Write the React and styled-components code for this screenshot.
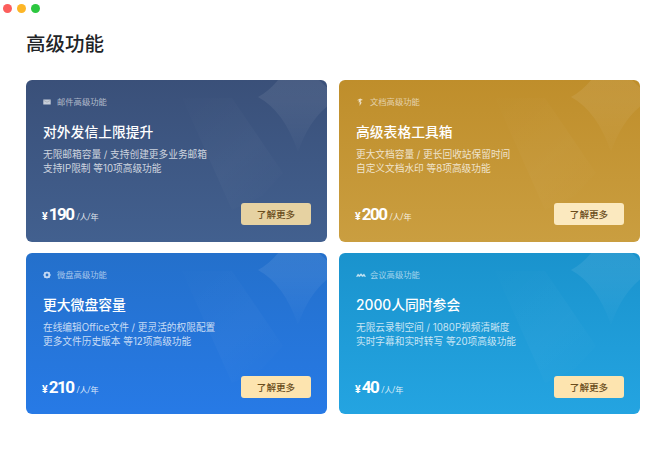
import React from "react";
import styled, { createGlobalStyle } from "styled-components";

const Global = createGlobalStyle`
  html, body { margin: 0; padding: 0; background: #fff; }
  body { font-family: "Inter", "Noto Sans CJK SC", sans-serif; }
`;

const Page = styled.div`
  width: 660px;
  height: 456px;
  overflow: hidden;
  box-sizing: border-box;
  padding: 4px 0 0 3px;
`;

const TrafficLights = styled.div`
  display: flex;
  gap: 5px;
`;

const Light = styled.span`
  width: 9px;
  height: 9px;
  border-radius: 50%;
  background: ${(p) => p.$color};
`;

const Main = styled.main`
  padding: 16px 0 0 23px;
`;

const Title = styled.h1`
  margin: 0 0 21px;
  font-size: 19.5px;
  line-height: 30px;
  font-weight: 500;
  color: #222427;
`;

const Grid = styled.div`
  display: grid;
  grid-template-columns: 301px 301px;
  grid-auto-rows: 161.5px;
  gap: 11px 12px;
`;

const Card = styled.article`
  position: relative;
  overflow: hidden;
  box-sizing: border-box;
  padding: 17px 16px 16.5px 17px;
  border-radius: 6px;
  background: linear-gradient(${(p) => p.$from}, ${(p) => p.$to});
  display: flex;
  flex-direction: column;
  color: #fff;
`;

const Decoration = styled.svg`
  position: absolute;
  inset: 0;
  width: 100%;
  height: 100%;
  pointer-events: none;
`;

const Content = styled.div`
  position: relative;
  flex: 1;
  display: flex;
  flex-direction: column;
`;

const Label = styled.div`
  display: flex;
  align-items: center;
  gap: 6px;
  height: 10px;
  font-size: 8.3px;
  line-height: 10px;
  color: rgba(255, 255, 255, 0.6);
`;

const IconBox = styled.svg`
  width: ${(p) => p.$width || 8}px;
  height: 8px;
  flex: none;
  margin-right: ${(p) => 8 - (p.$width || 8)}px;
  fill: rgba(255, 255, 255, 0.72);
`;

const Heading = styled.h2`
  margin: 15px 0 6px;
  font-size: 13.8px;
  line-height: 20px;
  font-weight: 500;
`;

const Desc = styled.p`
  margin: 0;
  font-size: 9.7px;
  line-height: 14px;
  color: rgba(255, 255, 255, 0.75);
  white-space: pre-line;
`;

const Footer = styled.div`
  margin-top: auto;
  display: flex;
  justify-content: space-between;
  align-items: center;
`;

const Price = styled.div`
  display: flex;
  align-items: baseline;
  font-family: "Roboto", "Noto Sans CJK SC", sans-serif;
`;

const Yen = styled.span`
  font-size: 10.5px;
  font-weight: 700;
  margin-left: -1px;
  margin-right: 1px;
`;

const Amount = styled.span`
  font-size: 17px;
  font-weight: 700;
  letter-spacing: -1.5px;
  margin-right: 3px;
`;

const Unit = styled.span`
  font-size: 8.2px;
  letter-spacing: -0.3px;
  color: rgba(255, 255, 255, 0.85);
`;

const Button = styled.button`
  width: 70px;
  height: 22px;
  padding: 0;
  border: 0;
  border-radius: 3px;
  background: ${(p) => p.$bg};
  color: #6a4d1c;
  font-family: inherit;
  font-size: 9.6px;
  font-weight: 500;
`;

const MailIcon = () => (
  <IconBox viewBox="0 0 8 8">
    <path d="M0.3 1.4h7.4v5.2H0.3z" />
    <path d="M0.6 2.4 4 4.2l3.4-1.8" fill="none" stroke="rgba(0,0,0,.25)" strokeWidth=".6" />
  </IconBox>
);
const DocIcon = () => (
  <IconBox viewBox="0 0 8 8">
    <path d="M1 2.2 4.2.6 7 1.9l-2.2.5V4.4l1.1-.2L3.6 8l.1-4-1.4.4.9-1.8z" />
  </IconBox>
);
const DiskIcon = () => (
  <IconBox viewBox="0 0 8 8">
    <path
      fillRule="evenodd"
      d="M4 .4 5.2 1.1 6.6 1 7 2.4 7.8 4 7 5.6 6.6 7 5.2 6.9 4 7.6 2.8 6.9 1.4 7 1 5.6.2 4 1 2.4 1.4 1 2.8 1.1zM4 2.6a1.4 1.4 0 1 0 0 2.8 1.4 1.4 0 0 0 0-2.8z"
    />
  </IconBox>
);
const MeetIcon = () => (
  <IconBox viewBox="0 0 10 8" $width={10}>
    <path d="M0 5.8 2 2.6l1.3 1.5L5 2.2l1.7 1.9L8 2.6l2 3.2H8.3L8 4.9l-1 .9H6L5 4.4 3.9 5.8H2.9L2 4.9l-.3.9z" />
  </IconBox>
);

const Art = ({ id }) => (
  <Decoration viewBox="0 0 301 161.5">
    <defs>
      <linearGradient id={id} x1="0.1" y1="0" x2="0.9" y2="1">
        <stop offset="0" stopColor="#fff" stopOpacity="0.005" />
        <stop offset="0.55" stopColor="#fff" stopOpacity="0.025" />
        <stop offset="1" stopColor="#fff" stopOpacity="0" />
      </linearGradient>
      <linearGradient id={id + "s"} x1="0" y1="0" x2="0" y2="1">
        <stop offset="0" stopColor="#fff" stopOpacity="0.09" />
        <stop offset="0.55" stopColor="#fff" stopOpacity="0.07" />
        <stop offset="1" stopColor="#fff" stopOpacity="0.01" />
      </linearGradient>
    </defs>
    <path d="M156 18H206L257 93 236 116 206 130Z" fill={`url(#${id})`} />
    <path
      d="M272 -38Q286 3 316 17Q286 31 272 72Q258 31 232 17Q258 3 272 -38Z"
      fill={`url(#${id}s)`}
    />
  </Decoration>
);

const cards = [
  {
    id: "mail", from: "#3a5079", to: "#42608f", Icon: MailIcon, label: "邮件高级功能",
    title: "对外发信上限提升", desc: "无限邮箱容量 / 支持创建更多业务邮箱\n支持IP限制 等10项高级功能",
    price: "190", btn: "#e6d2a2",
  },
  {
    id: "doc", from: "#bf8e2b", to: "#ca9e40", Icon: DocIcon, label: "文档高级功能",
    title: "高级表格工具箱", desc: "更大文档容量 / 更长回收站保留时间\n自定义文档水印 等8项高级功能",
    price: "200", btn: "#fbe9bf",
  },
  {
    id: "disk", from: "#2470cb", to: "#277ae6", Icon: DiskIcon, label: "微盘高级功能",
    title: "更大微盘容量", desc: "在线编辑Office文件 / 更灵活的权限配置\n更多文件历史版本 等12项高级功能",
    price: "210", btn: "#fde4af",
  },
  {
    id: "meet", from: "#1a93cd", to: "#24a4e1", Icon: MeetIcon, label: "会议高级功能",
    title: "2000人同时参会", desc: "无限云录制空间 / 1080P视频清晰度\n实时字幕和实时转写 等20项高级功能",
    price: "40", btn: "#fde4af",
  },
];

export default function App() {
  return (
    <Page>
      <Global />
      <TrafficLights>
        <Light $color="#fc5e5c" />
        <Light $color="#fdb627" />
        <Light $color="#2cc73f" />
      </TrafficLights>
      <Main>
        <Title>高级功能</Title>
        <Grid>
          {cards.map(({ id, from, to, Icon, label, title, desc, price, btn }) => (
            <Card key={id} $from={from} $to={to}>
              <Art id={id} />
              <Content>
                <Label>
                  <Icon />
                  {label}
                </Label>
                <Heading>{title}</Heading>
                <Desc>{desc}</Desc>
                <Footer>
                  <Price>
                    <Yen>¥</Yen>
                    <Amount>{price}</Amount>
                    <Unit>/人/年</Unit>
                  </Price>
                  <Button $bg={btn}>了解更多</Button>
                </Footer>
              </Content>
            </Card>
          ))}
        </Grid>
      </Main>
    </Page>
  );
}
